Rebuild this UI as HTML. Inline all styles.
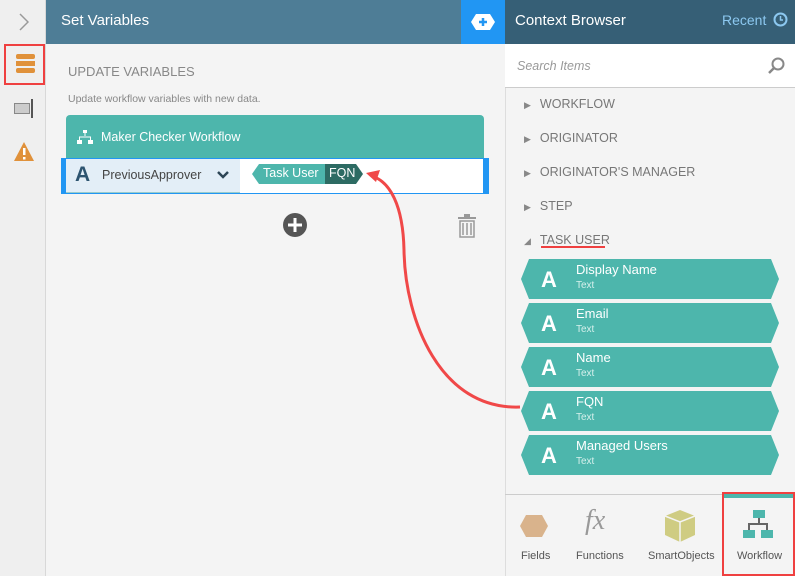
<!DOCTYPE html>
<html><head><style>
*{box-sizing:border-box;margin:0;padding:0}
body{width:795px;height:576px;overflow:hidden;font-family:"Liberation Sans",sans-serif;background:#f4f4f4;position:relative}
.abs{position:absolute}
.chip{position:absolute;left:521px;width:258px;height:40px;background:#4db6ac;clip-path:polygon(8px 0,250px 0,258px 20px,250px 40px,8px 40px,0 20px);color:#fff}
.chip b{position:absolute;left:20px;top:8px;font-size:22px;font-weight:bold}
.chip .t{position:absolute;left:55px;top:3px;font-size:13px}
.chip .s{position:absolute;left:55px;top:21px;font-size:10px;color:#d6f0ec}
.tree{position:absolute;left:524px;font-size:12.5px;color:#777}
.tree i{font-style:normal;font-size:9px;margin-right:9px;color:#888}
.tab{position:absolute;top:550px;font-size:11px;color:#555;text-align:center}
</style></head><body>
<div class="abs" style="left:0;top:0;width:46px;height:576px;background:#efefef;border-right:1px solid #d8d8d8"></div>
<svg class="abs" style="left:19px;top:13px" width="10" height="18"><path d="M1 1L9 9L1 17" stroke="#999" stroke-width="1.5" fill="none"/></svg>
<div class="abs" style="left:4px;top:44px;width:41px;height:41px;border:2px solid #ef4040"></div>
<div class="abs" style="left:16px;top:54px;width:19px;height:5px;background:#e0913a;border-radius:2px"></div>
<div class="abs" style="left:16px;top:61px;width:19px;height:5px;background:#e0913a"></div>
<div class="abs" style="left:16px;top:68px;width:19px;height:5px;background:#e0913a;border-radius:2px"></div>
<div class="abs" style="left:14px;top:103px;width:16px;height:11px;border:1px solid #888;background:#ccc"></div>
<div class="abs" style="left:31px;top:99px;width:2px;height:19px;background:#555"></div>
<svg class="abs" style="left:13px;top:141px" width="22" height="22"><path d="M11 1 L21 20 L1 20Z" fill="#e0913a"/><rect x="10" y="7" width="2.5" height="7" fill="#fff"/><rect x="10" y="16" width="2.5" height="2.5" fill="#fff"/></svg>

<div class="abs" style="left:46px;top:0;width:415px;height:44px;background:#4e7d96;color:#fff;font-size:15px;padding:12px 15px">Set Variables</div>
<div class="abs" style="left:461px;top:0;width:44px;height:44px;background:#2196f3"></div>
<svg class="abs" style="left:471px;top:14px" width="24" height="16"><path d="M5 0H19L24 8L19 16H5L0 8Z" fill="#fff"/><path d="M12 4V12M8 8H16" stroke="#2196f3" stroke-width="2.5"/></svg>

<div class="abs" style="left:68px;top:64px;font-size:13px;color:#888">UPDATE VARIABLES</div>
<div class="abs" style="left:68px;top:93px;font-size:10.5px;color:#888">Update workflow variables with new data.</div>
<div class="abs" style="left:66px;top:115px;width:418px;height:44px;background:#4db6ac;border-radius:4px 4px 0 0;color:#fff;font-size:12.5px;padding:15px 0 0 35px">Maker Checker Workflow</div>
<svg class="abs" style="left:77px;top:130px" width="16" height="14" fill="#fff"><rect x="6" y="0" width="4" height="3"/><rect x="0" y="10" width="5" height="4"/><rect x="11" y="10" width="5" height="4"/><path d="M8 3V6M2.5 10V7H13.5V10" stroke="#fff" fill="none"/></svg>
<div class="abs" style="left:61px;top:158px;width:428px;height:36px;background:#2196f3"></div>
<div class="abs" style="left:66px;top:159px;width:174px;height:34px;background:#e3eef7;border-bottom:1px solid #9cc"></div>
<div class="abs" style="left:75px;top:163px;font-size:21px;font-weight:bold;color:#2d5470">A</div>
<div class="abs" style="left:102px;top:168px;font-size:12.5px;color:#444">PreviousApprover</div>
<svg class="abs" style="left:216px;top:170px" width="14" height="10"><path d="M2 2L7 7L12 2" stroke="#2d4555" stroke-width="2.5" fill="none"/></svg>
<div class="abs" style="left:240px;top:159px;width:243px;height:34px;background:#fff"></div>
<div class="abs" style="left:252px;top:164px;width:74px;height:20px;background:#4db6ac;clip-path:polygon(7px 0,100% 0,100% 100%,7px 100%,0 50%);color:#fff;font-size:12.5px;padding:2px 0 0 11px">Task User</div>
<div class="abs" style="left:325px;top:164px;width:38px;height:20px;background:#2d6b63;clip-path:polygon(0 0,31px 0,100% 50%,31px 100%,0 100%);color:#fff;font-size:12.5px;padding:2px 0 0 4px">FQN</div>
<svg class="abs" style="left:283px;top:213px" width="24" height="24"><circle cx="12" cy="12" r="12" fill="#555"/><path d="M12 5V19M5 12H19" stroke="#fff" stroke-width="3"/></svg>
<svg class="abs" style="left:458px;top:214px" width="18" height="24" fill="#999"><rect x="0" y="3" width="18" height="2"/><rect x="6" y="0" width="6" height="3"/><path d="M2 7H16V23H2Z M5 9V21 M9 9V21 M13 9V21" stroke="#999" fill="none" stroke-width="1.5"/></svg>

<div class="abs" style="left:505px;top:0;width:290px;height:576px;background:#f4f4f4;border-left:1px solid #ddd"></div>
<div class="abs" style="left:505px;top:0;width:290px;height:44px;background:#365f76;color:#fff;font-size:15px;padding:12px 10px">Context Browser</div>
<div class="abs" style="left:722px;top:12px;color:#8cc8f0;font-size:14px">Recent</div>
<svg class="abs" style="left:773px;top:12px" width="15" height="15"><circle cx="7.5" cy="7.5" r="6" stroke="#8cc8f0" stroke-width="2" fill="none"/><path d="M7.5 4V8H10" stroke="#8cc8f0" stroke-width="1.5" fill="none"/></svg>
<div class="abs" style="left:505px;top:44px;width:290px;height:44px;background:#fff;border-bottom:1px solid #ccc"></div>
<div class="abs" style="left:517px;top:59px;font-size:12.5px;color:#999;font-style:italic">Search Items</div>
<svg class="abs" style="left:768px;top:57px" width="18" height="18"><circle cx="10" cy="7" r="5.5" stroke="#888" stroke-width="2" fill="none"/><path d="M6 11L1 16" stroke="#888" stroke-width="2.5"/></svg>
<div class="tree" style="top:97px"><i>&#9654;</i>WORKFLOW</div>
<div class="tree" style="top:131px"><i>&#9654;</i>ORIGINATOR</div>
<div class="tree" style="top:165px"><i>&#9654;</i>ORIGINATOR'S MANAGER</div>
<div class="tree" style="top:199px"><i>&#9654;</i>STEP</div>
<div class="tree" style="top:233px"><i>&#9698;</i>TASK USER</div>
<div class="abs" style="left:541px;top:246px;width:64px;height:2px;background:#ef4040"></div>
<div class="chip" style="top:259px"><b>A</b><div class="t">Display Name</div><div class="s">Text</div></div>
<div class="chip" style="top:303px"><b>A</b><div class="t">Email</div><div class="s">Text</div></div>
<div class="chip" style="top:347px"><b>A</b><div class="t">Name</div><div class="s">Text</div></div>
<div class="chip" style="top:391px"><b>A</b><div class="t">FQN</div><div class="s">Text</div></div>
<div class="chip" style="top:435px"><b>A</b><div class="t">Managed Users</div><div class="s">Text</div></div>
<div class="abs" style="left:505px;top:494px;width:290px;height:1px;background:#ccc"></div>
<svg class="abs" style="left:518px;top:515px" width="32" height="22"><path d="M8 0H24L30 11L24 22H8L2 11Z" fill="#d9b38c"/><path d="M4 0L-2 11L4 22" stroke="#f4f4f4" stroke-width="3" fill="none"/></svg>
<div class="abs" style="left:585px;top:505px;font-size:28px;font-style:italic;color:#999;font-family:'Liberation Serif',serif">fx</div>
<svg class="abs" style="left:664px;top:510px" width="32" height="32"><path d="M16 0L31 6V25L16 32L1 25V6Z" fill="#cfcc82"/><path d="M1 6L16 12L31 6M16 12V32" stroke="#f4f4f4" stroke-width="1.5" fill="none"/></svg>
<div class="tab" style="left:521px">Fields</div>
<div class="tab" style="left:576px">Functions</div>
<div class="tab" style="left:648px">SmartObjects</div>
<div class="abs" style="left:722px;top:492px;width:73px;height:84px;border:2px solid #ef4040"></div>
<div class="abs" style="left:724px;top:494px;width:69px;height:4px;background:#4db6ac"></div>
<svg class="abs" style="left:743px;top:510px" width="32" height="32"><rect x="10" y="0" width="12" height="8" fill="#4db6ac"/><rect x="0" y="20" width="12" height="8" fill="#4db6ac"/><rect x="18" y="20" width="12" height="8" fill="#4db6ac"/><path d="M16 8V14M6 20V14H24V20" stroke="#666" stroke-width="2" fill="none"/></svg>
<div class="tab" style="left:737px">Workflow</div>

<svg class="abs" style="left:0;top:0" width="795" height="576"><path d="M520 407 C440 410 405 320 404 250 C403 205 390 182 372 176" stroke="#f04848" stroke-width="3" fill="none"/><path d="M366 173L380 170L376 182Z" fill="#f04848"/></svg>
</body></html>
